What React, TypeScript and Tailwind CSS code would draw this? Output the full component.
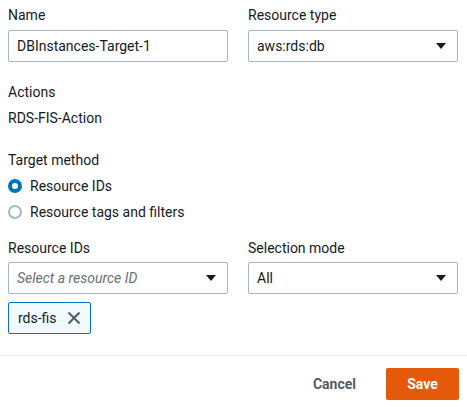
import React from 'react';

const Caret = () => (
  <svg width="10" height="6" viewBox="0 0 10 6" className="shrink-0">
    <path d="M0 0 L10 0 L5 6 Z" fill="#16191f" />
  </svg>
);

const Select: React.FC<{ value: string; placeholder?: boolean }> = ({ value, placeholder }) => (
  <div className="flex h-8 items-center justify-between rounded-[2px] border border-[#aab7b8] bg-white pl-2 pr-[11px]">
    <span className={placeholder ? 'italic text-[#687078]' : 'text-[#16191f]'}>{value}</span>
    <Caret />
  </div>
);

export default function App() {
  return (
    <div
      className="h-[407px] w-[467px] bg-white text-[14px] leading-5 text-[#16191f]"
      style={{ fontFamily: 'Roboto, "Noto Sans", sans-serif' }}
    >
      <div className="px-2 pt-[5px]">
        <div className="grid grid-cols-[220px_210px] gap-x-5">
          <div>
            <div className="mb-[5px]">Name</div>
            <div className="flex h-8 items-center rounded-[2px] border border-[#aab7b8] pl-2">
              DBInstances-Target-1
            </div>
          </div>
          <div>
            <div className="mb-[5px]">Resource type</div>
            <Select value="aws:rds:db" />
          </div>
        </div>

        <div className="mt-5">Actions</div>
        <div className="mt-[6px]">RDS-FIS-Action</div>

        <div className="mt-[22px]">Target method</div>
        <div className="mt-[6px] flex items-center gap-2">
          <span className="h-[14px] w-[14px] rounded-full border-[4px] border-[#0073bb] bg-white" />
          <span>Resource IDs</span>
        </div>
        <div className="mt-[6px] flex items-center gap-2">
          <span className="h-[14px] w-[14px] rounded-full border-2 border-[#aab7b8] bg-white" />
          <span>Resource tags and filters</span>
        </div>

        <div className="mt-4 grid grid-cols-[220px_210px] gap-x-5">
          <div>
            <div className="mb-[4px]">Resource IDs</div>
            <Select value="Select a resource ID" placeholder />
          </div>
          <div>
            <div className="mb-[4px]">Selection mode</div>
            <Select value="All" />
          </div>
        </div>

        <div className="mt-2 inline-flex h-8 items-center gap-[10px] rounded-[2px] border border-[#0073bb] bg-[#f1faff] pl-[9px] pr-[9px]">
          <span>rds-fis</span>
          <svg width="14" height="14" viewBox="0 0 14 14">
            <path d="M1.5 1.5 L12.5 12.5 M12.5 1.5 L1.5 12.5" stroke="#545b64" strokeWidth="2" />
          </svg>
        </div>
      </div>

      <div className="mt-[21px] border-t border-[#eaeded]" />

      <div className="flex items-center justify-end gap-[30px] px-2 pt-3">
        <button className="font-bold text-[#545b64]">Cancel</button>
        <button className="h-8 w-[73px] rounded-[2px] bg-[#e5590b] font-bold text-white">Save</button>
      </div>
    </div>
  );
}
